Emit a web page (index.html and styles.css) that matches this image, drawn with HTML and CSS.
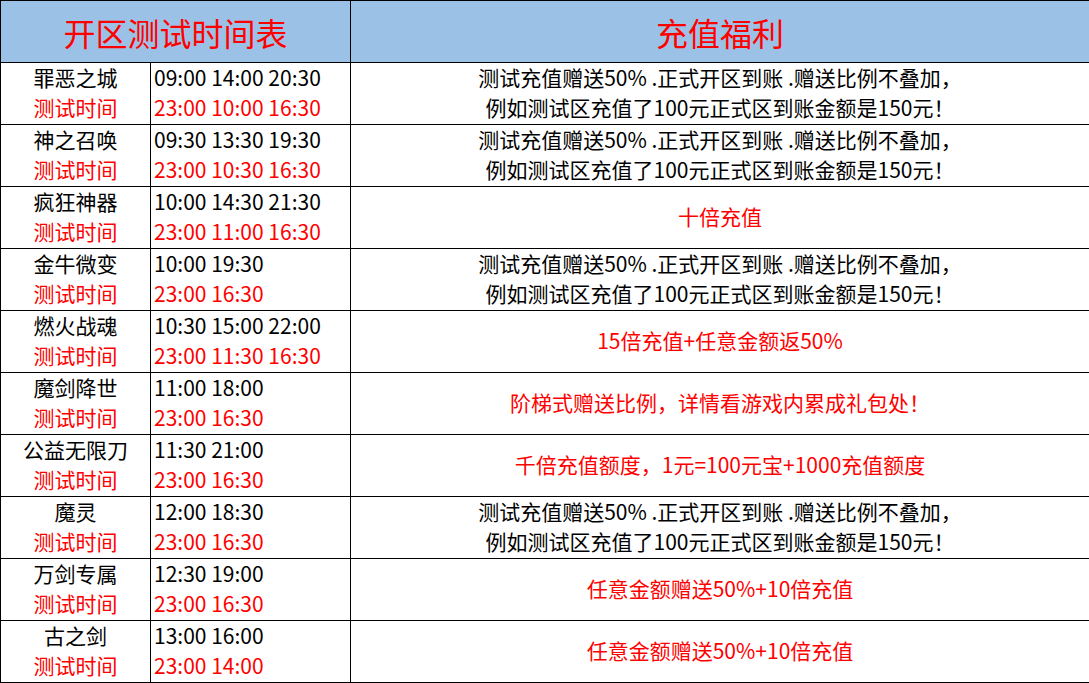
FILE: index.html
```html
<!DOCTYPE html>
<html lang="zh-CN">
<head>
<meta charset="utf-8">
<title>开区测试时间表</title>
<link rel="stylesheet" href="styles.css">
</head>
<body>
<table class="sched">
  <colgroup>
    <col class="c-name">
    <col class="c-time">
    <col class="c-bonus">
  </colgroup>
  <thead>
    <tr>
      <th colspan="2">开区测试时间表</th>
      <th>充值福利</th>
    </tr>
  </thead>
  <tbody>
    <tr>
      <td class="name"><div>罪恶之城</div><div class="red">测试时间</div></td>
      <td class="time"><div>09:00 14:00 20:30</div><div class="red">23:00 10:00 16:30</div></td>
      <td class="bonus"><div>测试充值赠送50% .正式开区到账 .赠送比例不叠加，</div><div>例如测试区充值了100元正式区到账金额是150元！</div></td>
    </tr>
    <tr>
      <td class="name"><div>神之召唤</div><div class="red">测试时间</div></td>
      <td class="time"><div>09:30 13:30 19:30</div><div class="red">23:00 10:30 16:30</div></td>
      <td class="bonus"><div>测试充值赠送50% .正式开区到账 .赠送比例不叠加，</div><div>例如测试区充值了100元正式区到账金额是150元！</div></td>
    </tr>
    <tr>
      <td class="name"><div>疯狂神器</div><div class="red">测试时间</div></td>
      <td class="time"><div>10:00 14:30 21:30</div><div class="red">23:00 11:00 16:30</div></td>
      <td class="bonus red"><div>十倍充值</div></td>
    </tr>
    <tr>
      <td class="name"><div>金牛微变</div><div class="red">测试时间</div></td>
      <td class="time"><div>10:00 19:30</div><div class="red">23:00 16:30</div></td>
      <td class="bonus"><div>测试充值赠送50% .正式开区到账 .赠送比例不叠加，</div><div>例如测试区充值了100元正式区到账金额是150元！</div></td>
    </tr>
    <tr>
      <td class="name"><div>燃火战魂</div><div class="red">测试时间</div></td>
      <td class="time"><div>10:30 15:00 22:00</div><div class="red">23:00 11:30 16:30</div></td>
      <td class="bonus red"><div>15倍充值+任意金额返50%</div></td>
    </tr>
    <tr>
      <td class="name"><div>魔剑降世</div><div class="red">测试时间</div></td>
      <td class="time"><div>11:00 18:00</div><div class="red">23:00 16:30</div></td>
      <td class="bonus red"><div>阶梯式赠送比例，详情看游戏内累成礼包处！</div></td>
    </tr>
    <tr>
      <td class="name"><div>公益无限刀</div><div class="red">测试时间</div></td>
      <td class="time"><div>11:30 21:00</div><div class="red">23:00 16:30</div></td>
      <td class="bonus red"><div>千倍充值额度，1元=100元宝+1000充值额度</div></td>
    </tr>
    <tr>
      <td class="name"><div>魔灵</div><div class="red">测试时间</div></td>
      <td class="time"><div>12:00 18:30</div><div class="red">23:00 16:30</div></td>
      <td class="bonus"><div>测试充值赠送50% .正式开区到账 .赠送比例不叠加，</div><div>例如测试区充值了100元正式区到账金额是150元！</div></td>
    </tr>
    <tr>
      <td class="name"><div>万剑专属</div><div class="red">测试时间</div></td>
      <td class="time"><div>12:30 19:00</div><div class="red">23:00 16:30</div></td>
      <td class="bonus red"><div>任意金额赠送50%+10倍充值</div></td>
    </tr>
    <tr>
      <td class="name"><div>古之剑</div><div class="red">测试时间</div></td>
      <td class="time"><div>13:00 16:00</div><div class="red">23:00 14:00</div></td>
      <td class="bonus red"><div>任意金额赠送50%+10倍充值</div></td>
    </tr>
  </tbody>
</table>
</body>
</html>
```

FILE: styles.css
```css
html, body {
  margin: 0;
  padding: 0;
  background: #ffffff;
}

body {
  font-family: "Noto Sans CJK SC", "Noto Sans", sans-serif;
  color: #000000;
}

.sched {
  border-collapse: collapse;
  width: 1089px;
  table-layout: fixed;
}

.c-name { width: 150px; }
.c-time { width: 200px; }
.c-bonus { width: 739px; }

.sched th,
.sched td {
  border: 1px solid #000000;
  padding: 0;
  vertical-align: middle;
}

.sched th {
  height: 61px;
  background: #9bc2e6;
  color: #ff0000;
  font-size: 32px;
  font-weight: normal;
  text-align: center;
  line-height: 40px;
}

.sched td {
  height: 61px;
  font-size: 21px;
  line-height: 30px;
  white-space: nowrap;
}

.sched td > div:first-child {
  margin-top: -4px;
}

.name {
  text-align: center;
}

.sched td.time {
  text-align: left;
  padding-left: 3px;
}

.bonus {
  text-align: center;
}

.red {
  color: #ff0000;
}
```
